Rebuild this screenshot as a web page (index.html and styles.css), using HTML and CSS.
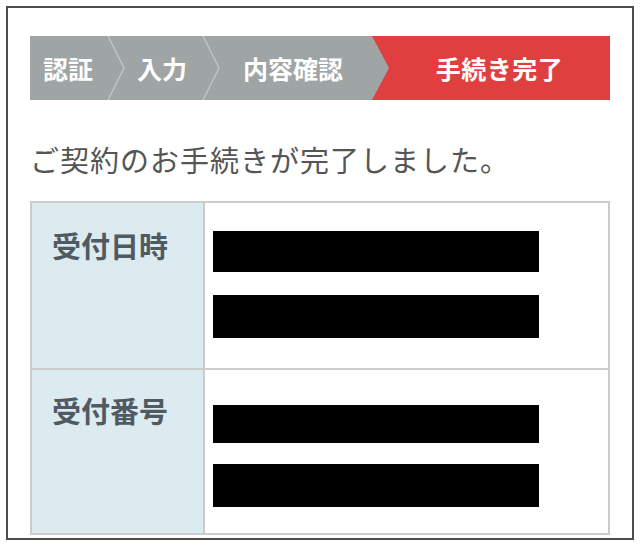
FILE: index.html
```html
<!DOCTYPE html>
<html lang="ja">
<head>
    <meta charset="UTF-8">
    <meta name="viewport" content="width=device-width, initial-scale=1.0">
    <title>手続き完了</title>
    <link rel="stylesheet" href="styles.css">
</head>
<body>
    <div class="frame">
        <!-- Step bar -->
        <div class="steps">
            <div class="step step-first">認証</div>
            <svg class="sep" width="18" height="64" viewBox="0 0 18 64">
                <polyline points="1,0 17,32 1,64" fill="none" stroke="#bfc4c3" stroke-width="1.5"/>
            </svg>
            <div class="step step-second">入力</div>
            <svg class="sep" width="18" height="64" viewBox="0 0 18 64">
                <polyline points="1,0 17,32 1,64" fill="none" stroke="#bfc4c3" stroke-width="1.5"/>
            </svg>
            <div class="step step-third">内容確認</div>
            <div class="step step-current">
                <svg class="arrow" width="17" height="64" viewBox="0 0 17 64">
                    <polygon points="0,0 17,32 0,64" fill="#9ea5a4"/>
                </svg>
                <span class="step-label">手続き完了</span>
            </div>
        </div>

        <p class="message">ご契約のお手続きが完了しました。</p>

        <!-- Receipt info -->
        <div class="info">
            <div class="label">受付日時</div>
            <div class="value value-date">
                <div class="mask mask-a"></div>
                <div class="mask mask-b"></div>
            </div>
            <div class="label label-second">受付番号</div>
            <div class="value value-number">
                <div class="mask mask-c"></div>
                <div class="mask mask-b"></div>
            </div>
        </div>
    </div>
</body>
</html>
```

FILE: styles.css
```css
/* General */
body {
    margin: 0;
    background: #fff;
    font-family: "Noto Sans CJK JP", "Noto Sans", sans-serif;
}

.frame {
    box-sizing: border-box;
    width: 628px;
    height: 534px;
    margin: 6px;
    padding: 28px 22px 0 22px;
    border: 2px solid #4d4d4d;
}

/* Step bar */
.steps {
    display: flex;
    align-items: center;
    height: 64px;
    background: #9ea5a4;
    color: #fff;
    font-size: 25px;
    font-weight: bold;
}

.step {
    flex: none;
    box-sizing: border-box;
    line-height: 64px;
    white-space: nowrap;
}

.sep {
    flex: none;
    display: block;
}

.step-first {
    width: 77px;
    padding-left: 13px;
}

.step-second {
    width: 77px;
    padding-left: 12px;
}

.step-third {
    width: 152px;
    padding-left: 23px;
}

.step-current {
    flex: 1;
    display: flex;
    height: 64px;
    background: #e03f3f;
}

.arrow {
    flex: none;
    display: block;
}

.step-label {
    flex: 1;
    text-align: center;
    letter-spacing: 0.5px;
}

/* Message */
.message {
    margin: 39px 0 22px 0;
    font-size: 29px;
    line-height: 40px;
    letter-spacing: 1px;
    color: #555;
    white-space: nowrap;
}

/* Info table */
.info {
    display: grid;
    grid-template-columns: 171px 1fr;
    gap: 2px;
    border: 2px solid #cccccc;
    background: #cccccc;
}

.label {
    padding: 22px 0 0 20px;
    background: #dcebf0;
    color: #4f5a62;
    font-size: 29px;
    font-weight: bold;
    line-height: 40px;
}

.label-second {
    padding-top: 20px;
}

.value {
    display: flex;
    flex-direction: column;
    background: #fff;
    padding-left: 8px;
}

.value-date {
    height: 165px;
    box-sizing: border-box;
    padding-top: 28px;
    gap: 23px;
}

.value-number {
    height: 163px;
    box-sizing: border-box;
    padding-top: 35px;
    gap: 21px;
}

.mask {
    width: 326px;
    background: #000;
}

.mask-a {
    height: 41px;
}

.mask-b {
    height: 43px;
}

.mask-c {
    height: 38px;
}
```
